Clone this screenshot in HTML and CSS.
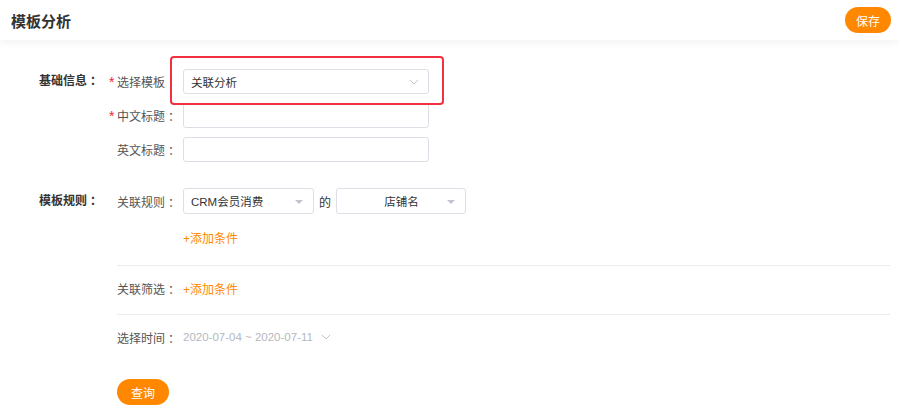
FILE: index.html
```html
<!DOCTYPE html>
<html lang="zh-CN">
<head>
    <meta charset="UTF-8">
    <meta name="viewport" content="width=device-width, initial-scale=1.0">
    <title>模板分析</title>
    <link rel="stylesheet" href="styles.css">
</head>
<body>
<header class="topbar">
    <h1>模板分析</h1>
    <button class="btn-orange save">保存</button>
</header>

<main class="page">
    <!-- 基础信息 -->
    <section class="section">
        <div class="section-title">基础信息<span class="colon">：</span></div>
        <div class="fields">
            <div class="field">
                <label class="field-label"><span class="req">*</span>选择模板<span class="colon">：</span></label>
                <div class="select wide">
                    <span>关联分析</span>
                    <svg class="chevron" width="10" height="6" viewBox="0 0 10 6"><path d="M1 1l4 4 4-4" fill="none" stroke="#c0c4cc" stroke-width="1"/></svg>
                </div>
            </div>
            <div class="field">
                <label class="field-label"><span class="req">*</span>中文标题<span class="colon">：</span></label>
                <input class="input wide" type="text">
            </div>
            <div class="field">
                <label class="field-label">英文标题<span class="colon">：</span></label>
                <input class="input wide" type="text">
            </div>
        </div>
        <div class="mark"></div>
    </section>

    <!-- 模板规则 -->
    <section class="section rules">
        <div class="section-title tall">模板规则<span class="colon">：</span></div>
        <div class="fields">
            <div class="field field-tall">
                <label class="field-label">关联规则<span class="colon">：</span></label>
                <div class="select small">
                    <span>CRM会员消费</span>
                    <i class="caret"></i>
                </div>
                <span class="of">的</span>
                <div class="select small center">
                    <span>店铺名</span>
                    <i class="caret"></i>
                </div>
            </div>
            <div class="add-row">
                <a class="link-add">+添加条件</a>
            </div>
            <div class="divider"></div>
            <div class="line-row">
                <label class="field-label">关联筛选<span class="colon">：</span></label>
                <a class="link-add">+添加条件</a>
            </div>
            <div class="divider"></div>
            <div class="line-row">
                <label class="field-label">选择时间<span class="colon">：</span></label>
                <span class="date">2020-07-04 ~ 2020-07-11</span>
                <svg class="chevron" width="10" height="6" viewBox="0 0 10 6"><path d="M1 1l4 4 4-4" fill="none" stroke="#c0c4cc" stroke-width="1"/></svg>
            </div>
            <button class="btn-orange query">查询</button>
        </div>
    </section>
</main>
</body>
</html>
```

FILE: styles.css
```css
body {
    font-family: "Liberation Sans", "Noto Sans CJK SC", sans-serif;
    font-size: 12px;
    color: #555;
    background: #fff;
    margin: 0;
    padding: 0;
}
.topbar {
    height: 40px;
    display: flex;
    align-items: center;
    justify-content: space-between;
    padding: 0 8px 0 11px;
    background: #fff;
    box-shadow: 0 2px 8px rgba(0, 0, 0, 0.06);
    position: relative;
}
.topbar h1 {
    margin: 0;
    font-size: 15px;
    font-weight: 600;
    color: #333;
}
.btn-orange {
    background-color: #ff8800;
    color: #fff;
    border: none;
    height: 26px;
    padding: 0;
    border-radius: 13px;
    font-family: inherit;
    font-size: 12px;
    cursor: pointer;
}
.save {
    width: 46px;
}
.page {
    padding: 29px 9px 0 39px;
}
.section {
    display: flex;
    position: relative;
}
.section-title {
    width: 78px;
    flex-shrink: 0;
    line-height: 25px;
    font-weight: 600;
    color: #333;
}
.section-title.tall {
    line-height: 26px;
}
.colon {
    margin-left: 3px;
}
.fields {
    flex: 1;
}
.field {
    display: flex;
    align-items: center;
    height: 25px;
    margin-bottom: 9px;
}
.field:last-child {
    margin-bottom: 0;
}
.field-label {
    width: 66px;
    flex-shrink: 0;
    white-space: nowrap;
    position: relative;
}
.req {
    color: #f5222d;
    font-size: 14px;
    position: absolute;
    left: -8px;
    top: 1px;
}
.input, .select {
    box-sizing: border-box;
    height: 25px;
    border: 1px solid #dcdfe6;
    border-radius: 3px;
    background: #fff;
    font-family: inherit;
    font-size: 11.5px;
    padding: 0 7px;
}
.wide {
    width: 246px;
}
.select {
    display: flex;
    align-items: center;
    justify-content: space-between;
    color: #333;
}
.select .chevron {
    margin-right: 2px;
}
.field-tall {
    height: 26px;
}
.field-tall .select {
    height: 26px;
}
.select.small {
    width: 131px;
}
.select.center {
    width: 130px;
}
.select.center span {
    flex: 1;
    text-align: center;
    padding-left: 12px;
}
.caret {
    width: 0;
    height: 0;
    border-left: 4px solid transparent;
    border-right: 4px solid transparent;
    border-top: 4px solid #c0c4cc;
    margin: 2px 3px 0 0;
}
.of {
    color: #333;
    margin: 0 5px 0 5px;
    width: 12px;
}
.rules {
    margin-top: 26px;
}
.add-row {
    padding-left: 66px;
    line-height: 24px;
    margin-top: 13px;
}
.link-add {
    color: #ff8800;
    cursor: pointer;
}
.divider {
    height: 1px;
    background: #ececec;
    margin-top: 14px;
}
.line-row {
    display: flex;
    align-items: center;
    height: 24px;
    margin-top: 10px;
}
.date {
    color: #b4b8c0;
    font-size: 11.5px;
}
.line-row .chevron {
    margin-left: 8px;
}
.query {
    margin-top: 30px;
    width: 52px;
}
.mark {
    position: absolute;
    left: 131px;
    top: -13px;
    width: 274px;
    height: 49px;
    box-sizing: border-box;
    border: 2px solid #f3303f;
    border-radius: 4px;
    pointer-events: none;
}
```
